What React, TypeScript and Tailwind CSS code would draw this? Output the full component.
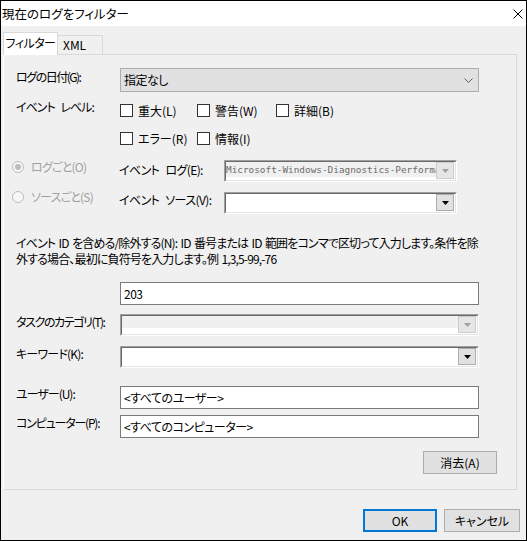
import React from "react";

function DropBtn({ disabled }: { disabled?: boolean }) {
  return (
    <div
      className={
        disabled
          ? "w-[18px] h-[17px] mr-[1px] border border-[#cccccc] bg-[#e6e6e6] flex items-center justify-center shrink-0"
          : "w-[18px] h-[17px] mr-[1px] border border-[#adadad] bg-[#e1e1e1] flex items-center justify-center shrink-0"
      }
    >
      <svg width="7" height="4" viewBox="0 0 7 4">
        <polygon points="0,0 7,0 3.5,4" fill={disabled ? "#a0a0a0" : "#000"} />
      </svg>
    </div>
  );
}

function Combo({
  wide,
  disabled,
  text,
  grayH,
}: {
  wide?: boolean;
  disabled?: boolean;
  text?: string;
  grayH?: number;
}) {
  return (
    <div
      className={
        (wide ? "w-[359px]" : "w-[233px]") +
        " h-[22px] shrink-0 border border-t-[#a0a0a0] border-l-[#a0a0a0] border-b-white border-r-white"
      }
    >
      <div className="h-full flex border border-t-[#696969] border-l-[#696969] border-b-[#e3e3e3] border-r-[#e3e3e3] bg-white">
        <div className="flex-1 flex flex-col overflow-hidden">
          {disabled ? (
            <div
              className={
                (grayH === 12 ? "h-[12px]" : "h-[15px]") +
                " bg-[#f0f0f0] flex items-center whitespace-nowrap overflow-hidden"
              }
            >
              {text ? (
                <span className="font-['DejaVu_Sans_Mono',monospace] text-[9.4px] text-[#6d6d6d] leading-[15px] [font-feature-settings:normal]">
                  {text}
                </span>
              ) : null}
            </div>
          ) : null}
        </div>
        <DropBtn disabled={disabled} />
      </div>
    </div>
  );
}

function Check({ label, w }: { label: string; w: string }) {
  return (
    <div className={w + " flex items-center whitespace-nowrap"}>
      <div className="w-[13px] h-[13px] border border-[#333333] bg-white shrink-0" />
      <span className="ml-[5px] leading-[16px]">{label}</span>
    </div>
  );
}

function Radio({ label, checked }: { label: string; checked?: boolean }) {
  return (
    <div className="flex items-center leading-[16px] whitespace-nowrap">
      <div className="w-[12px] h-[12px] rounded-full border border-[#bcbcbc] bg-[#f7f7f7] flex items-center justify-center shrink-0">
        {checked ? <div className="w-[6px] h-[6px] rounded-full bg-[#bcbcbc]" /> : null}
      </div>
      <span className="ml-[7px] text-[#a0a0a0] tracking-[-0.8px]">{label}</span>
    </div>
  );
}

function TextBox({ value }: { value: string }) {
  return (
    <div className="w-[359px] h-[23px] shrink-0 border border-[#7a7a7a] bg-white flex items-center pl-[3px] leading-[16px] whitespace-nowrap tracking-[-0.5px]">
      {value}
    </div>
  );
}

function Btn({ label, w, primary }: { label: string; w: string; primary?: boolean }) {
  return (
    <div
      className={
        w +
        (primary
          ? " h-[23px] border-2 border-[#0078d7] bg-[#e1e1e1] flex items-center justify-center"
          : " h-[23px] border border-[#adadad] bg-[#e1e1e1] flex items-center justify-center")
      }
    >
      {label}
    </div>
  );
}

export default function App() {
  return (
    <div className="w-[527px] h-[541px] border border-black bg-[#f0f0f0] flex flex-col text-[12px] text-black font-['Noto_Sans_CJK_JP',sans-serif] [font-feature-settings:'palt'] overflow-hidden">
      {/* title bar */}
      <div className="h-[25px] bg-white flex items-center justify-between pl-[1px] pr-[2px] shrink-0">
        <span className="text-[12.5px] leading-[16px]">現在のログをフィルター</span>
        <svg width="10" height="10" viewBox="0 0 10 10" className="mr-[1px]">
          <line x1="0.5" y1="0.5" x2="9.5" y2="9.5" stroke="#000" strokeWidth="1" />
          <line x1="9.5" y1="0.5" x2="0.5" y2="9.5" stroke="#000" strokeWidth="1" />
        </svg>
      </div>

      {/* tabs */}
      <div className="mt-[6px] ml-[2px] flex items-end h-[23px] shrink-0">
        <div className="relative z-10 h-[23px] w-[55px] bg-white border border-b-0 border-[#d9d9d9] flex items-start justify-center pt-[2px] leading-[16px] whitespace-nowrap tracking-[-0.5px]">
          フィルター
        </div>
        <div className="h-[20px] w-[45px] border border-l-0 border-b-0 border-[#d9d9d9] bg-[#f0f0f0] flex items-start pl-[5px] pt-[1px] leading-[16px]">
          XML
        </div>
      </div>

      {/* panel */}
      <div className="-mt-[1px] ml-[2px] w-[514px] h-[436px] border border-[#d9d9d9] border-l-white bg-[#f0f0f0] flex flex-col shrink-0">
        {/* date */}
        <div className="mt-[13px] flex items-start pl-[12px]">
          <div className="w-[104px] pt-[1px] leading-[16px] whitespace-nowrap tracking-[-1.5px]">ログの日付(G):</div>
          <div className="w-[359px] h-[24px] border border-[#adadad] bg-[#e1e1e1] flex items-center justify-between pl-[3px] pr-[5px] leading-[16px]">
            <span className="tracking-[-0.5px]">指定なし</span>
            <svg width="9" height="5" viewBox="0 0 9 5">
              <polyline points="0.5,0.5 4.5,4.5 8.5,0.5" fill="none" stroke="#606060" strokeWidth="1" />
            </svg>
          </div>
        </div>

        {/* levels */}
        <div className="mt-[12px] flex items-start pl-[12px] h-[13px]">
          <div className="w-[104px] -mt-[5px] leading-[16px] whitespace-nowrap tracking-[-1px] [word-spacing:4px]">イベント レベル:</div>
          <div className="flex items-center h-[13px]">
            <Check label="重大(L)" w="w-[77px]" />
            <Check label="警告(W)" w="w-[79px]" />
            <Check label="詳細(B)" w="w-[80px]" />
          </div>
        </div>
        <div className="mt-[15px] flex items-center pl-[116px] h-[13px]">
          <Check label="エラー(R)" w="w-[77px]" />
          <Check label="情報(I)" w="w-[79px]" />
        </div>

        {/* log row */}
        <div className="mt-[15px] flex items-start pl-[8px] h-[22px]">
          <div className="w-[107px] -mt-[1px] shrink-0">
            <Radio label="ログごと(O)" checked />
          </div>
          <div className="w-[105px] mt-[2px] leading-[16px] whitespace-nowrap shrink-0 tracking-[-0.6px] [word-spacing:4px]">イベント ログ(E):</div>
          <Combo disabled text="Microsoft-Windows-Diagnostics-Performance/Operational" />
        </div>

        {/* source row */}
        <div className="mt-[10px] flex items-start pl-[8px] h-[22px]">
          <div className="w-[107px] -mt-[3px] shrink-0">
            <Radio label="ソースごと(S)" />
          </div>
          <div className="w-[105px] leading-[16px] whitespace-nowrap shrink-0 tracking-[-0.6px] [word-spacing:4px]">イベント ソース(V):</div>
          <Combo />
        </div>

        {/* description */}
        <div className="mt-[21px] pl-[12px] leading-[16px] whitespace-nowrap tracking-[-0.85px] [word-spacing:1.5px]">
          イベント ID を含める/除外する(N): ID 番号または ID 範囲をコンマで区切って入力します。条件を除
          <br />
          外する場合、最初に負符号を入力します。例 1,3,5-99,-76
        </div>

        {/* id input */}
        <div className="mt-[15px] pl-[116px]">
          <TextBox value="203" />
        </div>

        {/* task */}
        <div className="mt-[9px] flex items-start pl-[12px]">
          <div className="w-[104px] leading-[16px] whitespace-nowrap shrink-0 tracking-[-1.4px]">タスクのカテゴリ(T):</div>
          <Combo wide disabled grayH={12} />
        </div>

        {/* keyword */}
        <div className="mt-[10px] flex items-start pl-[12px]">
          <div className="w-[104px] leading-[16px] whitespace-nowrap shrink-0 tracking-[-0.8px]">キーワード(K):</div>
          <Combo wide />
        </div>

        {/* user */}
        <div className="mt-[18px] flex items-start pl-[12px]">
          <div className="w-[104px] leading-[16px] whitespace-nowrap shrink-0 tracking-[-1px]">ユーザー(U):</div>
          <TextBox value="<すべてのユーザー>" />
        </div>

        {/* computer */}
        <div className="mt-[6px] flex items-start pl-[12px]">
          <div className="w-[104px] leading-[16px] whitespace-nowrap shrink-0 tracking-[-1.2px]">コンピューター(P):</div>
          <TextBox value="<すべてのコンピューター>" />
        </div>

        {/* clear */}
        <div className="mt-[13px] flex justify-end pr-[19px]">
          <Btn label="消去(A)" w="w-[74px]" />
        </div>
      </div>

      {/* footer buttons */}
      <div className="mt-[19px] flex justify-end gap-[7px] pr-[6px]">
        <Btn label="OK" w="w-[74px]" primary />
        <Btn label="キャンセル" w="w-[76px]" />
      </div>
    </div>
  );
}
